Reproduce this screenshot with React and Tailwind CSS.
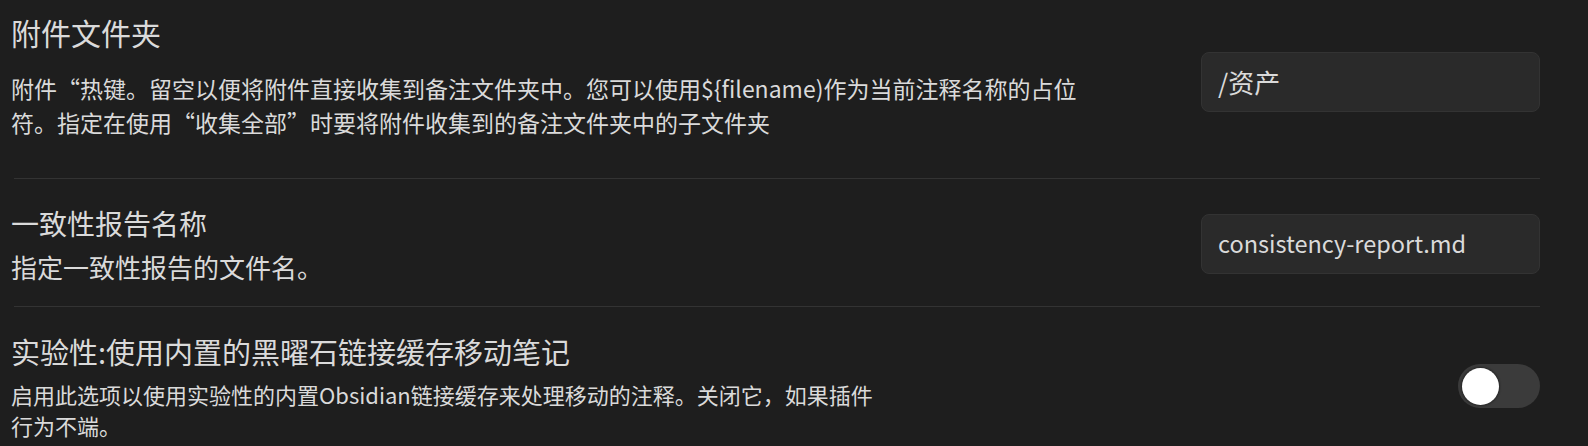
import React from "react";

function TextBox({ value, className = "" }) {
  return (
    <div className={`flex h-[60px] w-[339px] shrink-0 items-center rounded-[8px] border border-[#333333] bg-[#2a2a2a] px-[16px] text-[#dadada] ${className}`}>
      {value}
    </div>
  );
}

function Toggle() {
  return (
    <div className="relative h-[44px] w-[82px] shrink-0 rounded-full bg-[#3b3b3b]">
      <div className="absolute left-[4px] top-[3.5px] h-[37px] w-[37px] rounded-full bg-white shadow-[0_0_2px_1px_rgba(0,0,0,0.35)]" />
    </div>
  );
}

export default function App() {
  return (
    <div className="min-h-screen bg-[#1e1e1e] pl-[11px] pr-[48px] font-['Noto_Sans_CJK_SC','Noto_Sans',sans-serif] text-[#dadada]">
      <div className="flex items-center pb-[39px] pt-[12px]">
        <div className="flex-1">
          <div className="text-[30px] leading-[40px]">附件文件夹</div>
          <div className="mt-[20px] text-[23px] leading-[33.5px]">
            附件“热键。留空以便将附件直接收集到备注文件夹中。您可以使用${"{"}filename)作为当前注释名称的占位
            <br />
            符。指定在使用“收集全部”时要将附件收集到的备注文件夹中的子文件夹
          </div>
        </div>
        <TextBox value="/资产" className="mt-[12px] text-[26px]" />
      </div>

      <div className="ml-[3px] h-px bg-[#333333]" />

      <div className="flex items-center pb-[22px] pt-[24px]">
        <div className="flex-1">
          <div className="text-[28px] leading-[40px]">一致性报告名称</div>
          <div className="mt-[7px] text-[26px] leading-[34px]">指定一致性报告的文件名。</div>
        </div>
        <TextBox value="consistency-report.md" className="text-[23.5px]" />
      </div>

      <div className="ml-[3px] h-px bg-[#333333]" />

      <div className="flex items-center pt-[24px]">
        <div className="flex-1">
          <div className="text-[29px] leading-[40px]">实验性:使用内置的黑曜石链接缓存移动笔记</div>
          <div className="mt-[8px] text-[22px] leading-[31px]">
            启用此选项以使用实验性的内置Obsidian链接缓存来处理移动的注释。关闭它，如果插件
            <br />
            行为不端。
          </div>
        </div>
        <Toggle />
      </div>
    </div>
  );
}
